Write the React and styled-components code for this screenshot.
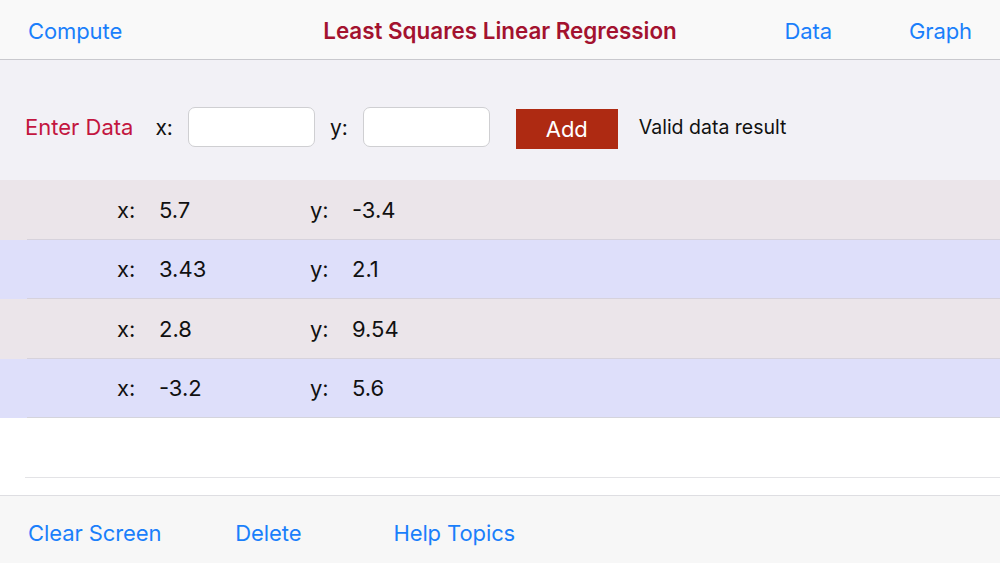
import React from "react"
import styled, { createGlobalStyle } from "styled-components"

const GlobalStyle = createGlobalStyle`
  html, body {
    margin: 0;
    padding: 0;
    background: #ffffff;
  }
  body {
    font-family: Inter, "Noto Sans", "Liberation Sans", sans-serif;
    -webkit-font-smoothing: antialiased;
  }
`

const blue = "#1a7ffb"

const Screen = styled.div`
  width: 1000px;
  height: 563px;
  display: flex;
  flex-direction: column;
  overflow: hidden;
  background: #ffffff;
`

const NavBar = styled.div`
  height: 60px;
  flex: none;
  display: grid;
  grid-template-columns: 1fr auto 1fr;
  align-items: center;
  padding: 2px 28px 0;
  background: #f9f9f9;
  border-bottom: 1px solid #c9c9ce;
  box-sizing: border-box;
`

const NavLink = styled.a`
  color: ${blue};
  font-size: 22px;
  text-decoration: none;
  cursor: pointer;
  letter-spacing: -0.1px;
`

const Title = styled.div`
  color: #a3122f;
  font-size: 22.4px;
  font-weight: 600;
`

const NavRight = styled.div`
  display: flex;
  justify-content: flex-end;
  gap: 77px;
`

const EntryPanel = styled.div`
  height: 120px;
  flex: none;
  display: flex;
  align-items: center;
  padding: 14px 0 0 25px;
  box-sizing: border-box;
  background: #f2f1f6;
`

const EntryLabel = styled.span`
  color: #c3163f;
  font-size: 22px;
  margin-right: 22px;
`

const AxisLabel = styled.span`
  color: #111;
  font-size: 21px;
  margin-right: 15px;
`

const Field = styled.input`
  width: 127px;
  height: 40px;
  box-sizing: border-box;
  border: 1px solid #cfcfd2;
  border-radius: 7px;
  background: #fff;
  margin-right: 15px;
  outline: none;
`

const AddButton = styled.button`
  width: 102px;
  height: 40px;
  margin: 4px 0 0 11px;
  border: none;
  background: #ae2a12;
  color: #fff;
  font-family: inherit;
  font-size: 22px;
  cursor: pointer;
`

const Status = styled.span`
  margin-left: 21px;
  color: #111;
  font-size: 19.5px;
`

const Row = styled.div`
  height: 59.5px;
  flex: none;
  display: flex;
  align-items: center;
  background: ${p => (p.$alt ? "#dedffa" : "#ebe5ea")};
  position: relative;
  font-size: 22px;
  color: #111;
  &::after {
    content: "";
    position: absolute;
    left: 27px;
    right: 0;
    bottom: 0;
    height: 1px;
    background: ${p => (p.$last ? "#d4d4dc" : "#d6d2dc")};
  }
`

const Cell = styled.div`
  display: flex;
  width: 193px;
  padding-left: ${p => p.$first ? "117px" : "0"};
`

const Key = styled.span`
  width: 42px;
`

const EmptyRow = styled.div`
  height: 59px;
  flex: none;
  margin-left: 25px;
  border-bottom: 1px solid #e3e3e6;
`

const Spacer = styled.div`
  flex: 1;
`

const ToolBar = styled.div`
  height: 68px;
  flex: none;
  display: flex;
  align-items: center;
  padding: 6px 0 0 28px;
  box-sizing: border-box;
  background: #f7f7f7;
  border-top: 1px solid #dedee2;
`

const ToolLink = styled(NavLink)`
  margin-right: ${p => p.$gap}px;
`

const points = [
  { x: "5.7", y: "-3.4" },
  { x: "3.43", y: "2.1" },
  { x: "2.8", y: "9.54" },
  { x: "-3.2", y: "5.6" },
]

export default function App() {
  return (
    <>
      <GlobalStyle />
      <Screen>
        <NavBar>
          <div>
            <NavLink>Compute</NavLink>
          </div>
          <Title>Least Squares Linear Regression</Title>
          <NavRight>
            <NavLink>Data</NavLink>
            <NavLink>Graph</NavLink>
          </NavRight>
        </NavBar>
        <EntryPanel>
          <EntryLabel>Enter Data</EntryLabel>
          <AxisLabel>x:</AxisLabel>
          <Field />
          <AxisLabel>y:</AxisLabel>
          <Field />
          <AddButton>Add</AddButton>
          <Status>Valid data result</Status>
        </EntryPanel>
        {points.map((p, i) => (
          <Row key={i} $alt={i % 2 === 1} $last={i === points.length - 1}>
            <Cell $first>
              <Key>x:</Key>
              <span>{p.x}</span>
            </Cell>
            <Cell>
              <Key>y:</Key>
              <span>{p.y}</span>
            </Cell>
          </Row>
        ))}
        <EmptyRow />
        <Spacer />
        <ToolBar>
          <ToolLink $gap={74}>Clear Screen</ToolLink>
          <ToolLink $gap={92}>Delete</ToolLink>
          <ToolLink $gap={0}>Help Topics</ToolLink>
        </ToolBar>
      </Screen>
    </>
  )
}
